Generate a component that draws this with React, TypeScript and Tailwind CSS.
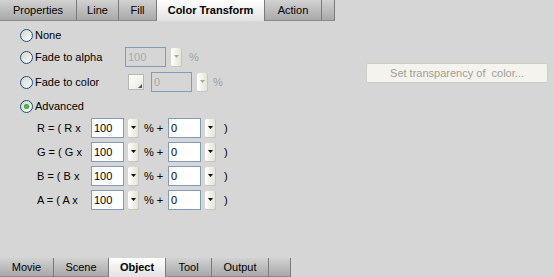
import React from "react";

const font = { fontFamily: '"Liberation Sans", Arial, sans-serif' };

function Radio({ checked = false }: { checked?: boolean }) {
  return (
    <div className="relative w-[13px] h-[13px] rounded-full border border-[#1c5180] bg-gradient-to-br from-[#d4d4cc] to-[#ffffff] flex items-center justify-center shrink-0">
      {checked && (
        <div className="w-[5px] h-[5px] rounded-full bg-[radial-gradient(circle,#55d455_0%,#21a121_70%)]" />
      )}
    </div>
  );
}

function Drop({ disabled = false }: { disabled?: boolean }) {
  return (
    <div className="w-[11px] h-[19px] rounded-[2px] bg-gradient-to-r from-[#ffffff] to-[#e6e4d6] border-r border-b border-[#c8c6b6] flex items-center justify-center shrink-0">
      <svg width="5" height="3" viewBox="0 0 5 3">
        <path d="M0 0 L5 0 L2.5 3 Z" fill={disabled ? "#a8a8a0" : "#000"} />
      </svg>
    </div>
  );
}

function Input({ value, disabled = false, w }: { value: string; disabled?: boolean; w: string }) {
  return (
    <div
      className={`${w} h-[20px] border border-[#7f9db9] flex items-center pl-[2px] text-[11px] shrink-0 ${
        disabled ? "bg-[#d6d6d6] text-[#a8a8a8]" : "bg-white text-black"
      }`}
    >
      {value}
    </div>
  );
}

function Tab({ label, w, active = false }: { label: string; w: string; active?: boolean }) {
  return (
    <div
      className={`${w} h-full flex items-center justify-center text-[11px] border-r border-[#7a7a7a] shrink-0 ${
        active
          ? "bg-gradient-to-b from-[#ffffff] to-[#e2e2e2] font-bold"
          : "bg-gradient-to-b from-[#d2d2d2] to-[#a9a9a9] border-b border-b-[#8a8a8a]"
      }`}
    >
      {label}
    </div>
  );
}

function AdvRow({ ch }: { ch: string }) {
  return (
    <div className="flex items-center h-[20px] pl-[37px]">
      <div className="w-[54px] text-[11px] whitespace-pre">{`${ch} = ( ${ch} x`}</div>
      <Input value="100" w="w-[33px]" />
      <div className="ml-[4px]">
        <Drop />
      </div>
      <div className="ml-[5px] w-[24px] text-[11px] whitespace-pre">% +</div>
      <Input value="0" w="w-[33px]" />
      <div className="ml-[4px]">
        <Drop />
      </div>
      <div className="ml-[8px] text-[11px]">)</div>
    </div>
  );
}

export default function App() {
  return (
    <div style={font} className="w-[554px] h-[277px] bg-[#d6d6d6] flex flex-col text-black overflow-hidden">
      <div className="h-[21px] flex shrink-0">
        <Tab label="Properties" w="w-[77px]" />
        <Tab label="Line" w="w-[42px]" />
        <Tab label="Fill" w="w-[38px]" />
        <Tab label="Color Transform" w="w-[108px]" active />
        <Tab label="Action" w="w-[57px]" />
        <Tab label="" w="w-[13px]" />
      </div>

      <div className="flex-1 flex">
        <div className="flex flex-col w-[340px]">
          <div className="flex items-center h-[14px] mt-[7px] pl-[20px] gap-[2px]">
            <Radio />
            <span className="text-[11px]">None</span>
          </div>
          <div className="flex items-center h-[20px] mt-[5px] pl-[20px]">
            <Radio />
            <span className="text-[11px] ml-[2px] w-[90px]">Fade to alpha</span>
            <Input value="100" disabled w="w-[41px]" />
            <div className="ml-[5px]">
              <Drop disabled />
            </div>
            <span className="ml-[7px] text-[11px] text-[#a0a0a0]">%</span>
          </div>
          <div className="flex items-center h-[20px] mt-[5px] pl-[20px]">
            <Radio />
            <span className="text-[11px] ml-[2px] w-[93px]">Fade to color</span>
            <div className="relative w-[16px] h-[16px] border border-[#b8b8b0] bg-gradient-to-br from-[#ffffff] to-[#e8e8e0] shrink-0">
              <svg className="absolute right-[1px] bottom-[1px]" width="4" height="4" viewBox="0 0 4 4">
                <path d="M4 0 L4 4 L0 4 Z" fill="#555" />
              </svg>
            </div>
            <div className="ml-[7px]">
              <Input value="0" disabled w="w-[41px]" />
            </div>
            <div className="ml-[5px]">
              <Drop disabled />
            </div>
            <span className="ml-[5px] text-[11px] text-[#a0a0a0]">%</span>
          </div>
          <div className="flex items-center h-[14px] mt-[7px] pl-[20px] gap-[2px]">
            <Radio checked />
            <span className="text-[11px]">Advanced</span>
          </div>
          <div className="flex flex-col gap-[4px] mt-[5px]">
            <AdvRow ch="R" />
            <AdvRow ch="G" />
            <AdvRow ch="B" />
            <AdvRow ch="A" />
          </div>
        </div>
        <div className="ml-[26px] mt-[42px]">
          <div className="w-[182px] h-[20px] rounded-[2px] bg-[#f4f3ee] border border-[#cfcdc2] flex items-center justify-center text-[11px] text-[#a19f92]">
            Set transparency of&nbsp; color...
          </div>
        </div>
      </div>

      <div className="h-[19px] flex shrink-0">
        <Tab label="Movie" w="w-[54px]" />
        <Tab label="Scene" w="w-[55px]" />
        <Tab label="Object" w="w-[57px]" active />
        <Tab label="Tool" w="w-[46px]" />
        <Tab label="Output" w="w-[57px]" />
        <Tab label="" w="w-[22px]" />
      </div>
    </div>
  );
}
